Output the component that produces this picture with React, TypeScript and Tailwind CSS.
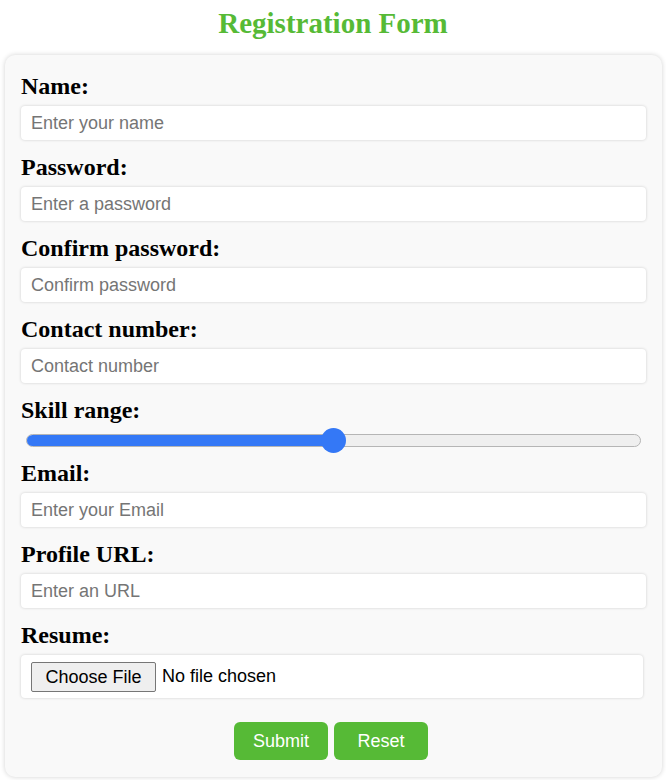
const fields = [
  { label: "Name:", placeholder: "Enter your name", type: "text" },
  { label: "Password:", placeholder: "Enter a password", type: "password" },
  { label: "Confirm password:", placeholder: "Confirm password", type: "password" },
  { label: "Contact number:", placeholder: "Contact number", type: "tel" },
];

const more = [
  { label: "Email:", placeholder: "Enter your Email", type: "email" },
  { label: "Profile URL:", placeholder: "Enter an URL", type: "url" },
];

const labelCls =
  "block text-[24px] leading-[27px] font-bold text-black mb-[6px] [font-family:'Liberation_Serif','Times_New_Roman',serif]";

function Field({ label, placeholder, type }: { label: string; placeholder: string; type: string }) {
  return (
    <div className="mb-[14px]">
      <label className={labelCls}>{label}</label>
      <input
        type={type}
        placeholder={placeholder}
        className="block w-full h-[34px] px-[10px] bg-white rounded-[4px] shadow-[0_0_3px_rgba(0,0,0,0.18)] text-[18px] text-black placeholder:text-[#757575] outline-none"
      />
    </div>
  );
}

export default function App() {
  const value = 50;

  return (
    <div className="min-h-[780px] bg-white [font-family:'Liberation_Sans',Arial,sans-serif]">
      <h1 className="pt-[6px] text-center text-[29px] leading-[34px] font-bold text-[#56ba36] [font-family:'Liberation_Serif','Times_New_Roman',serif]">
        Registration Form
      </h1>

      <form className="mt-[15px] ml-[5px] w-[657px] bg-[#f9f9f9] rounded-[10px] shadow-[0_0_5px_rgba(0,0,0,0.18)] px-[16px] pt-[18px] pb-[17px]">
        {fields.map((f) => (
          <Field key={f.label} {...f} />
        ))}

        <div>
          <label className={labelCls}>Skill range:</label>
          <div className="relative h-[28px] mx-[5px] -mt-[4px] mb-[6px] flex items-center">
            <div className="relative w-full h-[13px] rounded-full bg-[#efefef] border border-[#b5b5b5] overflow-hidden">
              <div className="h-full bg-[#3478f6]" style={{ width: `${value}%` }} />
            </div>
            <div
              className="absolute top-1/2 w-[25px] h-[25px] -ml-[12.5px] -mt-[12.5px] rounded-full bg-[#3478f6]"
              style={{ left: `${value}%` }}
            />
          </div>
        </div>

        {more.map((f) => (
          <Field key={f.label} {...f} />
        ))}

        <div>
          <label className={labelCls}>Resume:</label>
          <div className="flex items-center h-[43px] mt-[2px] mr-[3px] px-[10px] bg-white rounded-[4px] shadow-[0_0_3px_rgba(0,0,0,0.18)] text-[18px] text-black">
            <button
              type="button"
              className="h-[30px] w-[125px] bg-[#efefef] border border-[#767676] rounded-[2px] text-[18px] leading-none text-black"
            >
              Choose File
            </button>
            <span className="ml-[6px]">No file chosen</span>
          </div>
        </div>

        <div className="flex justify-center gap-[6px] mt-[24px] pr-[5px]">
          <button
            type="submit"
            className="w-[94px] h-[38px] rounded-[6px] bg-[#56ba36] text-white text-[18px]"
          >
            Submit
          </button>
          <button
            type="reset"
            className="w-[94px] h-[38px] rounded-[6px] bg-[#56ba36] text-white text-[18px]"
          >
            Reset
          </button>
        </div>
      </form>
    </div>
  );
}
